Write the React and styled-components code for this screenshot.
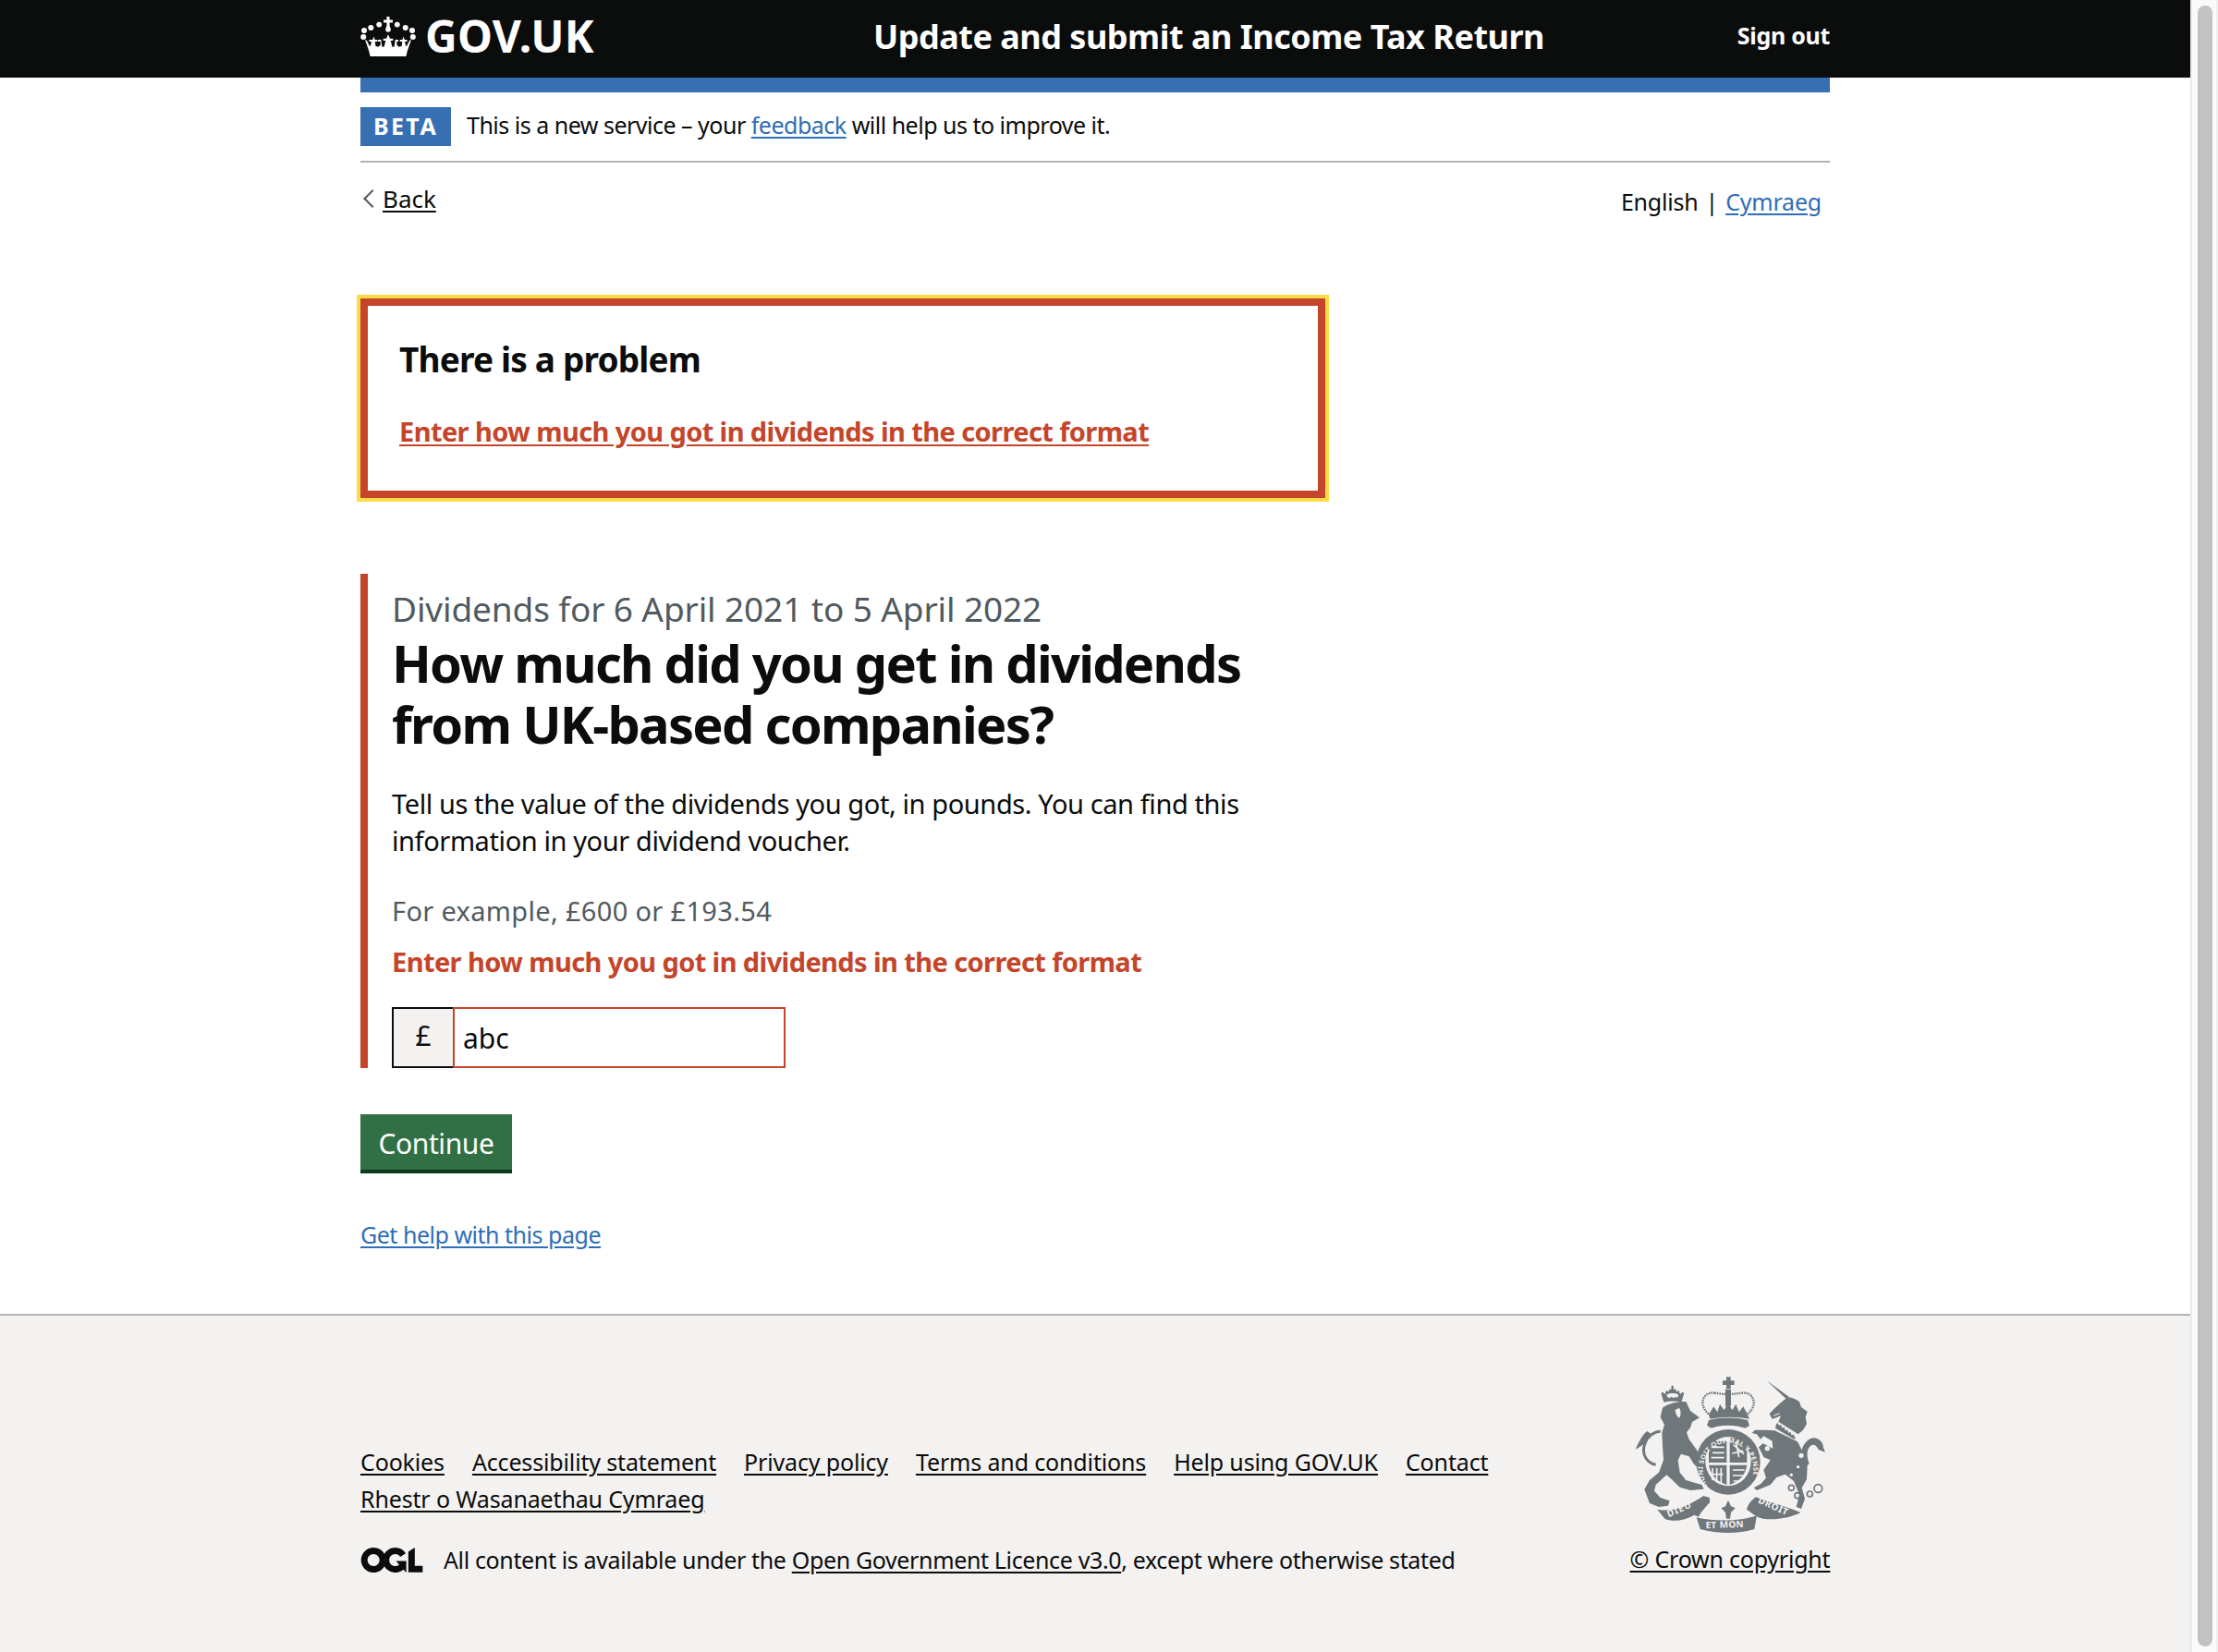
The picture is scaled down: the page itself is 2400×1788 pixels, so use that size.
import React from "react";
import styled, { createGlobalStyle } from "styled-components";

const FONT = `"Noto Sans", "Open Sans", Arial, sans-serif`;
const RED = "#c4452a";
const LINK = "#2e6eb5";

const Global = createGlobalStyle`
  html, body { margin: 0; padding: 0; height: 100%; overflow: hidden; background: #fff; }
  body { font-family: ${FONT}; color: #0b0c0c; }
  * { box-sizing: border-box; }
`;

const Page = styled.div`display: flex; width: 2400px; height: 1788px;`;
const Main = styled.div`width: 2370px; display: flex; flex-direction: column;`;
const Scrollbar = styled.div`
  width: 30px; background: #fafafa; border-left: 2px solid #ebebeb; border-right: 2px solid #f0f0f0;
  padding: 6px 4px 6px 6px; display: flex;
`;
const Thumb = styled.div`flex: 1; background: #c2c2c2; border-radius: 8px;`;

const Header = styled.header`background: #0b0c0c; height: 84px; color: #fff;`;
const Wrap = styled.div`width: 1590px; margin: 0 auto;`;
const HeaderRow = styled(Wrap)`display: flex; align-items: center; height: 84px;`;
const Logo = styled.div`display: flex; align-items: center; gap: 11px; width: 555px; flex: none;`;
const CrownMark = styled.svg`margin-top: -6px; flex: none;`;
const Wordmark = styled.span`font-size: 48px; font-weight: 700; line-height: 78px; letter-spacing: 0.2px; margin-top: -6px; margin-left: -1px;`;
const ServiceName = styled.span`font-size: 36px; font-weight: 700; letter-spacing: -0.5px; flex: 1; margin-top: -6px;`;
const SignOut = styled.span`font-size: 25px; font-weight: 700; margin-top: -9px; letter-spacing: -0.3px;`;

const BlueBar = styled(Wrap)`height: 16px; background: #3670b3;`;
const Phase = styled.div`display: flex; align-items: center; gap: 17px; padding: 16px 0; border-bottom: 2px solid #b1b4b6; height: 76px;`;
const Tag = styled.strong`
  background: #3670b3; color: #fff; width: 98px; height: 42px; display: flex; align-items: center; justify-content: center;
  font-size: 25px; font-weight: 700; letter-spacing: 2.4px; padding-bottom: 2px;
`;
const PhaseText = styled.span`font-size: 25px; letter-spacing: -0.5px; margin-top: -5px;`;
const BlueLink = styled.a`color: ${LINK}; text-decoration: underline; text-underline-offset: 3px;`;
const BlackLink = styled.a`color: #0b0c0c; text-decoration: underline; text-underline-offset: 3px;`;

const NavRow = styled.div`display: flex; justify-content: space-between; height: 147px; padding-top: 20px;`;
const Back = styled.div`display: flex; align-items: center; height: 38px; gap: 4px; font-size: 26px;`;
const Chevron = styled.span`
  display: block; width: 14px; height: 14px; margin-left: 6px; border-left: 2px solid #505a5f; border-bottom: 2px solid #505a5f; transform: rotate(45deg);
`;
const Lang = styled.div`display: flex; gap: 8px; font-size: 25px; margin-right: 9px; padding-top: 5px; letter-spacing: -0.2px;`;

const Summary = styled.div`
  width: 1044px; height: 216px; margin-bottom: 82px; border: 8px solid ${RED}; outline: 4px solid #fcdc46;
  padding: 32px 34px;
`;
const SummaryTitle = styled.h2`margin: 0 0 30px; font-size: 37px; line-height: 52px; font-weight: 700; letter-spacing: -0.83px;`;
const SummaryLink = styled.a`font-size: 29px; line-height: 44px; font-weight: 700; color: ${RED}; text-decoration: underline; text-underline-offset: 3px; letter-spacing: -0.6px; display: block;`;

const Group = styled.div`border-left: 8px solid ${RED}; padding-left: 26px; height: 535px; margin-bottom: 50px;`;
const Caption = styled.div`font-size: 37px; line-height: 50px; color: #505a5f; padding-top: 13px; letter-spacing: -0.12px;`;
const Title = styled.h1`margin: 0 0 34px; font-size: 56px; line-height: 66px; font-weight: 700; letter-spacing: -1.72px; width: 960px;`;
const Para = styled.p`margin: 0 0 36px; font-size: 29px; line-height: 40px; letter-spacing: -0.4px; width: 960px;`;
const Hint = styled.div`font-size: 29px; line-height: 40px; color: #505a5f; margin-bottom: 15px; letter-spacing: 0.33px;`;
const ErrorMsg = styled.div`font-size: 29px; line-height: 40px; font-weight: 700; color: ${RED}; margin-bottom: 29px; letter-spacing: -0.6px;`;
const InputRow = styled.div`display: flex; height: 66px; width: 426px;`;
const Prefix = styled.div`
  width: 66px; background: #f3f2f1; border: 2px solid #0b0c0c; border-right: 0; font-size: 30px; display: flex; align-items: center; justify-content: center; padding-bottom: 6px;
`;
const Field = styled.div`flex: 1; border: 2px solid ${RED}; font-size: 30px; display: flex; align-items: center; padding-left: 9px;`;

const Continue = styled.button`
  display: block; width: 164px; height: 64px; background: #307044; color: #fff; border: 0; box-shadow: inset 0 -4px 0 #0f3a20; font-family: ${FONT}; font-size: 30px; padding: 0 0 2px; margin-bottom: 47px; letter-spacing: -0.4px;
`;
const Help = styled.div`font-size: 25px; line-height: 38px; letter-spacing: -0.48px; margin-bottom: 67px;`;

const Footer = styled.footer`flex: 1; background: #f3f2f1; border-top: 2px solid #b1b4b6;`;
const FooterRow = styled(Wrap)`display: flex; justify-content: space-between; padding-top: 66px;`;
const FooterLeft = styled.div`padding-top: 72px; width: 1300px;`;
const LinkList = styled.div`display: flex; flex-wrap: wrap; column-gap: 30px; width: 1240px; font-size: 25px; line-height: 40px; letter-spacing: -0.15px;`;
const Licence = styled.div`display: flex; align-items: center; gap: 22px; margin-top: 26px; font-size: 25px; line-height: 40px; letter-spacing: -0.36px;`;
const FooterRight = styled.div`display: flex; flex-direction: column; align-items: center; width: 216px;`;
const Copyright = styled.div`font-size: 25px; line-height: 40px; margin-top: 8px; letter-spacing: -0.22px; white-space: nowrap;`;

const Crown = () => (
  <CrownMark width="60" height="44" viewBox="0 0 60 44" fill="#fff" aria-hidden="true">
    <path d="M28.4 1h3.2v3.4H35v3.2h-3.4v3.2l1.2 3.4a2.9 2.9 0 1 1-5.6 0l1.2-3.4V7.6H25V4.4h3.4z" />
    <circle cx="20.2" cy="9.6" r="2.9" /><circle cx="39.8" cy="9.6" r="2.9" />
    <circle cx="11.3" cy="13" r="3" /><circle cx="48.7" cy="13" r="3" />
    <circle cx="4" cy="16" r="3" /><circle cx="56" cy="16" r="3" />
    <circle cx="3.2" cy="23" r="3" /><circle cx="56.8" cy="23" r="3" />
    <path d="M7 27l-2-1 5 14.5C15 39 22 38.2 30 38.2s15 .8 20 2.3L55 26l-2 1-3 6-1-.8-1-4.2h2.5v-2H47.8l-1.2-3.4-1.2 3.4h-2.7v2h2.6l-.6 4.8-2.6 1-2.6-1.8-.2-4H41v-2h-2l-1.3-.2-.3 2.4-.8 5.6-2.3-.4-1.6-6.4h2.6v-2.3h-3.3l-2-4.4-2 4.4H24.7v2.3h2.6l-1.6 6.4-2.3.4-.8-5.6-.3-2.4-1.3.2h-2v2h2.8l-.2 4-2.6 1.8-2.6-1-.6-4.8h2.6v-2h-2.7l-1.2-3.4-1.2 3.4H9.5v2H12l-1 4.2-1 .8z" />
    <path d="M9.5 39.5C15 38 22 37.4 30 37.4s15 .6 20.5 2.1L49.4 44H10.6z" />
  </CrownMark>
);

const Ogl = () => (
  <svg width="68" height="27" viewBox="0 0 483.2 195.7" fill="#0b0c0c" aria-hidden="true">
    <path d="M421.5 142.8V.1l-50.7 32.3v161.1h112.4v-50.7zm-122.3-9.6A47.12 47.12 0 0 1 221 97.8c0-26 21.1-47.1 47.1-47.1 16.7 0 31.4 8.7 39.7 21.8l42.7-27.2A97.63 97.63 0 0 0 268.1 0c-36.5 0-68.3 20.1-85.1 49.7A98 98 0 0 0 97.8 0C43.9 0 0 43.9 0 97.8s43.9 97.8 97.8 97.8c36.5 0 68.3-20.1 85.1-49.7a97.76 97.76 0 0 0 149.6 25.4l19.4 22.2h3v-87.8h-80l24.3 27.5zM97.8 145c-26 0-47.1-21.1-47.1-47.1s21.1-47.1 47.1-47.1 47.2 21 47.2 47S123.8 145 97.8 145" />
  </svg>
);

const CG = "#6f777b";
const BG = "#f3f2f1";
const Crest = () => (
  <svg width="205" height="169" viewBox="85 60 615 505" fill={CG} aria-hidden="true">
    {/* lion crown */}
    <path d="M176 142l-9-30 6-3 7 7 4-12 8 4 3-10 5 4 1-14h6l1 14 6-4 3 10 8-4 4 12 7-7 6 3-9 30c-18-5-38-5-57 0z" />
    <path d="M184 118l12-5h18l10 5-4 10-6-4-6 5-7-5-7 5-6-5z" fill={BG} />
    {/* lion */}
    <path d="M172 160C190 145 225 138 248 140L262 170 292 192 268 206 262 225 250 240 258 262 285 300 305 335 312 358 296 360 275 345 258 318 232 310 222 330 228 370 248 395 280 405 300 410 306 424 262 428 228 418 204 395 185 378 150 410 145 430 165 452 195 462 190 478 160 482 130 470 113 425 130 395 160 370 175 330 172 285 170 240 178 215 165 190Z" />
    <path d="M150 345c-25-5-50-30-35-70 8-22 30-38 50-38" fill="none" stroke={CG} strokeWidth="9" />
    <path d="M122 236c-12 8-28 34-38 60l34-22 16-30z" />
    <path d="M226 160c6 10 6 24 0 34l-8-8-6-18z" fill={BG} />
    {/* central crown */}
    <path d="M379 60h14v12h12v14h-12v12h-14V86h-12V72h12z" />
    <rect x="376" y="100" width="18" height="54" />
    <path d="M342 112c-25-4-40 12-40 32 0 16 10 28 24 40 36-10 82-10 118 0 14-12 24-24 24-40 0-20-15-36-40-32-14 2-26 4-43 4s-29-2-43-4z" fill="none" stroke={CG} strokeWidth="7" strokeDasharray="5 3" />
    <path d="M322 182l16-26 12 18 8-26 14 20 12-26 14 26 12-20 10 26 14-18 14 26 6 14c-40-8-88-8-128 0z" />
    <path d="M322 200c40-10 86-10 126 0l6 18-14 8c-34-12-76-12-110 0l-14-8z" />
    {/* garter */}
    <ellipse cx="385" cy="336" rx="104" ry="106" />
    <ellipse cx="385" cy="334" rx="74" ry="80" fill={BG} />
    <path d="M322 268h58v70h-58zM390 258h56v80h-56zM322 346h58v64c-30-12-50-26-58-64zM390 346h56c-6 36-26 52-56 64z" />
    <g fill="none" stroke={BG} strokeWidth="5">
      <path d="M330 288h42M334 306h38M330 322h42" />
      <path d="M402 280l34 30M398 308l36-8M410 270l10 50" />
      <path d="M334 356v40M348 356v46M362 356v50M334 376h34" />
      <path d="M400 362h38M400 380h36M402 398h22" />
    </g>
    <defs>
      <path id="garterArc" d="M318 412A82 88 0 1 1 452 412" />
    </defs>
    <text fontFamily={FONT} fontSize="22" fontWeight="700" fill={BG} letterSpacing="1">
      <textPath href="#garterArc">HONI SOIT QUI MAL Y PENSE</textPath>
    </text>
    {/* unicorn: horn, head and neck */}
    <path d="M510 72l72 52-8 8z" />
    <path d="M578 126C560 140 535 160 519 180L528 197 556 186 548 205 612 246 628 232 640 212 636 190 642 172 622 158 616 140C604 132 590 126 578 126Z" />
    <path d="M532 186l20-8" fill="none" stroke={BG} strokeWidth="3" />
    {/* collar */}
    <path d="M540 212l6-4 4 8 8-2 2 10 8-2 2 10 8-2 3 10 8-2 2 10 8-2 2 8 4 6-6 3-62-36z" stroke={BG} strokeWidth="2" />
    {/* unicorn body and legs */}
    <path d="M536 234L610 270 628 305 642 350 640 392 624 420 634 456 622 488 606 482 616 442 598 398 570 376 542 386 522 410 478 428 468 420 490 408 508 388 500 362 522 330 500 320 484 288 498 276 530 292 528 268 500 252 490 262 478 246 462 242 472 232 504 232z" />
    {/* tail */}
    <path d="M624 345c-8-30-2-70 28-85 22-8 42 10 42 30l6 14-22-8c-6-14-16-20-26-12-14 12-12 36-4 58l-12 10z" />
    {/* chain */}
    <g fill="none" stroke={CG} strokeWidth="5">
      <circle cx="590" cy="420" r="9" /><circle cx="610" cy="445" r="9" /><circle cx="650" cy="440" r="9" /><circle cx="677" cy="422" r="13" />
    </g>
    <g fill={BG}>
      <circle cx="512" cy="292" r="8" /><circle cx="622" cy="315" r="8" /><circle cx="612" cy="352" r="5" /><circle cx="590" cy="378" r="5" />
    </g>
    {/* ribbons */}
    <path d="M155 490c50 10 100-10 150-44l20 6 0 16c-8 10-26 26-36 46l-14-6c-30 18-70 24-96 12z" />
    <path d="M445 490c5-14 10-26 30-40 30 14 100 30 145 50-20 12-60 22-100 22-20 0-40-6-50-14z" />
    <path d="M282 516c60 14 140 14 196-6l-8 44c-50 16-120 16-176 0z" />
    <path d="M385 460l9 20 14 6-14 14-3 20h-12l-3-20-14-14 14-6z" />
    <text x="192" y="516" transform="rotate(-24 192 516)" fontFamily={FONT} fontSize="30" fontWeight="700" fill={BG} letterSpacing="3">DIEU</text>
    <text x="312" y="552" transform="rotate(-2 312 552)" fontFamily={FONT} fontSize="30" fontWeight="700" fill={BG} letterSpacing="1">ET MON</text>
    <text x="480" y="468" transform="rotate(24 480 468)" fontFamily={FONT} fontSize="30" fontWeight="700" fill={BG} letterSpacing="2">DROIT</text>
  </svg>
);

export default function App() {
  return (
    <Page>
      <Global />
      <Main>
        <Header>
          <HeaderRow>
            <Logo><Crown /><Wordmark>GOV.UK</Wordmark></Logo>
            <ServiceName>Update and submit an Income Tax Return</ServiceName>
            <SignOut>Sign out</SignOut>
          </HeaderRow>
        </Header>
        <BlueBar />
        <Wrap>
          <Phase>
            <Tag>BETA</Tag>
            <PhaseText>This is a new service – your <BlueLink>feedback</BlueLink> will help us to improve it.</PhaseText>
          </Phase>
          <NavRow>
            <Back><Chevron /><BlackLink>Back</BlackLink></Back>
            <Lang><span>English</span><span>|</span><BlueLink>Cymraeg</BlueLink></Lang>
          </NavRow>
          <Summary>
            <SummaryTitle>There is a problem</SummaryTitle>
            <SummaryLink>Enter how much you got in dividends in the correct format</SummaryLink>
          </Summary>
          <Group>
            <Caption>Dividends for 6 April 2021 to 5 April 2022</Caption>
            <Title>How much did you get in dividends from UK-based companies?</Title>
            <Para>Tell us the value of the dividends you got, in pounds. You can find this information in your dividend voucher.</Para>
            <Hint>For example, £600 or £193.54</Hint>
            <ErrorMsg>Enter how much you got in dividends in the correct format</ErrorMsg>
            <InputRow><Prefix>£</Prefix><Field>abc</Field></InputRow>
          </Group>
          <Continue>Continue</Continue>
          <Help><BlueLink>Get help with this page</BlueLink></Help>
        </Wrap>
        <Footer>
          <FooterRow>
            <FooterLeft>
              <LinkList>
                <BlackLink>Cookies</BlackLink>
                <BlackLink>Accessibility statement</BlackLink>
                <BlackLink>Privacy policy</BlackLink>
                <BlackLink>Terms and conditions</BlackLink>
                <BlackLink>Help using GOV.UK</BlackLink>
                <BlackLink>Contact</BlackLink>
                <BlackLink>Rhestr o Wasanaethau Cymraeg</BlackLink>
              </LinkList>
              <Licence><Ogl /><span>All content is available under the <BlackLink>Open Government Licence v3.0</BlackLink>, except where otherwise stated</span></Licence>
            </FooterLeft>
            <FooterRight>
              <Crest />
              <Copyright><BlackLink>© Crown copyright</BlackLink></Copyright>
            </FooterRight>
          </FooterRow>
        </Footer>
      </Main>
      <Scrollbar><Thumb /></Scrollbar>
    </Page>
  );
}
